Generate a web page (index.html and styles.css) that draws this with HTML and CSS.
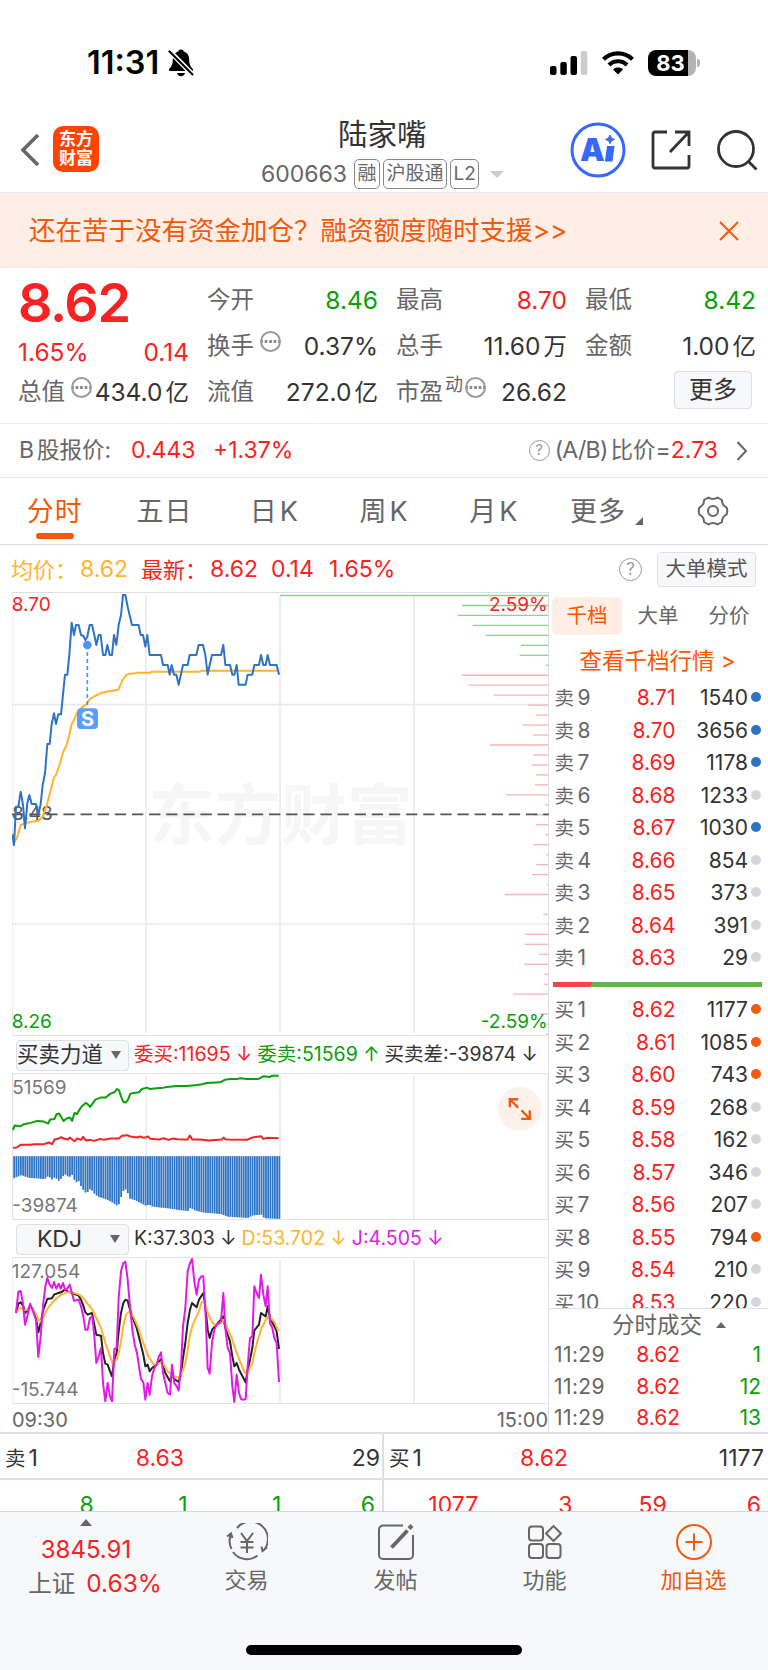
FILE: index.html
```
<!DOCTYPE html>
<html lang="zh-CN">
<head>
    <meta charset="UTF-8">
    <meta name="viewport" content="width=device-width, initial-scale=1.0">
    <title>陆家嘴 600663</title>
    <link rel="stylesheet" href="styles.css">
</head>
<body>

    <!-- Status bar -->
    <div class="status-bar">
        <span class="clock">11:31</span>
        <svg class="bell" width="26" height="28" viewBox="0 0 26 28">
            <path d="M13 0.5c-1.900 0-2.600 1-2.700 2C6.500 3.600 4.800 6.800 4.800 10.500c0 5-1.200 6.800-3.400 9.200-1 1.200-.5 2.300.8 2.300h21.600c1.300 0 1.800-1.100.8-2.300-2.200-2.400-3.400-4.200-3.400-9.200 0-3.700-1.700-6.900-5.500-8-.1-1-.8-2-2.700-2z"/>
            <path d="M9 24h8c-.4 2-1.900 3.200-4 3.200S9.400 26 9 24z"/>
            <path d="M0 0.500L26 27" stroke="#fff" stroke-width="5"/>
            <path d="M0.800 1.800L25 26" stroke="#000" stroke-width="2"/>
        </svg>
        <div class="status-right">
            <svg width="38" height="24" viewBox="0 0 38 24">
                <rect x="0" y="15" width="6.500" height="9" rx="2"/>
                <rect x="10.300" y="11" width="6.500" height="13" rx="2"/>
                <rect x="20.500" y="5" width="6.500" height="19" rx="2"/>
                <rect x="30.800" y="0" width="6.500" height="24" rx="2" fill="#ccc"/>
            </svg>
            <svg width="32" height="24" viewBox="0 0 32 24">
                <path d="M1.500 8.300C9.500 0.300 22.500 0.300 30.500 8.300" fill="none" stroke="#000" stroke-width="4.200"/>
                <path d="M7 14C12 9 20 9 25 14" fill="none" stroke="#000" stroke-width="4.200"/>
                <path d="M16 23.500l-5-5c2.800-2.600 7.200-2.600 10 0z"/>
            </svg>
            <div class="battery"><span>83</span></div>
        </div>
    </div>

    <!-- Header -->
    <div class="header">
        <svg class="back" width="20" height="34" viewBox="0 0 20 34"><path d="M18 2L3 17L18 32" fill="none" stroke="#666" stroke-width="3.600"/></svg>
        <div class="logo">东方<br>财富</div>
        <div class="stock">
            <div class="stock-name">陆家嘴</div>
            <div class="stock-code">
                <span class="code">600663</span>
                <span class="tag">融</span>
                <span class="tag">沪股通</span>
                <span class="tag">L2</span>
                <i class="caret"></i>
            </div>
        </div>
        <div class="header-icons">
            <svg width="56" height="56" viewBox="0 0 56 56">
                <circle cx="28" cy="28" r="26" fill="none" stroke="#3668ff" stroke-width="3"/>
                <text x="10" y="38.500" class="ai-text">A</text>
                <path d="M37 24h7.500l-2 15.500h-7.500z" fill="#3668ff"/>
                <path d="M40 13l1.400 3 3 1.400-3 1.400-1.400 3-1.400-3-3-1.400 3-1.400z" fill="#3668ff" stroke="#3668ff"/>
            </svg>
            <svg width="40" height="40" viewBox="0 0 40 40" fill="none" stroke="#333" stroke-width="2.800">
                <path d="M16 2H4a2 2 0 0 0-2 2v32a2 2 0 0 0 2 2h32a2 2 0 0 0 2-2V25"/>
                <path d="M24 2h14v14M38 2L19 22"/>
            </svg>
            <svg width="42" height="42" viewBox="0 0 42 42" fill="none" stroke="#333" stroke-width="2.800">
                <circle cx="20" cy="20" r="17.500"/>
                <path d="M32 32l8.500 8.500"/>
            </svg>
        </div>
    </div>

    <!-- Notice -->
    <div class="notice">
        <span>还在苦于没有资金加仓？融资额度随时支援&gt;&gt;</span>
        <svg width="20" height="20" viewBox="0 0 20 20"><path d="M1 1l18 18M19 1L1 19" stroke="#ef5a0c" stroke-width="2"/></svg>
    </div>

    <!-- Quote -->
    <div class="quote">
        <div class="quote-col main">
            <div class="price">8.62</div>
            <div class="item change red"><span>1.65%</span><span>0.14</span></div>
            <div class="item"><label>总值<i class="dots"></i></label><span>434.0<b>亿</b></span></div>
        </div>
        <div class="quote-col">
            <div class="item"><label>今开</label><span class="green">8.46</span></div>
            <div class="item"><label>换手<i class="dots gap"></i></label><span>0.37%</span></div>
            <div class="item"><label>流值</label><span>272.0<b>亿</b></span></div>
        </div>
        <div class="quote-col">
            <div class="item"><label>最高</label><span class="red">8.70</span></div>
            <div class="item"><label>总手</label><span>11.60<b>万</b></span></div>
            <div class="item"><label>市盈<sup>动</sup><i class="dots near"></i></label><span>26.62</span></div>
        </div>
        <div class="quote-col">
            <div class="item"><label>最低</label><span class="green">8.42</span></div>
            <div class="item"><label>金额</label><span>1.00<b>亿</b></span></div>
            <div class="item more"><button class="more-button">更多</button></div>
        </div>
    </div>

    <!-- B share row -->
    <div class="b-share">
        <span class="b-label">B<b>股报价:</b></span>
        <span class="red b-price">0.443</span>
        <span class="red">+1.37%</span>
        <span class="b-ratio"><i class="help small">?</i><span class="ab">(A/B)</span><b>比价</b>=<span class="red">2.73</span></span>
        <svg width="12" height="20" viewBox="0 0 12 20"><path d="M1.500 1L10 10L1.500 19" fill="none" stroke="#666" stroke-width="2"/></svg>
    </div>

    <!-- Chart tabs -->
    <div class="tabs">
        <div class="tab active">分时</div>
        <div class="tab">五日</div>
        <div class="tab">日<b>K</b></div>
        <div class="tab">周<b>K</b></div>
        <div class="tab">月<b>K</b></div>
        <div class="tab tab-more">更多<i class="corner"></i></div>
        <div class="tab">
            <svg width="32" height="32" viewBox="0 0 32 32" fill="none" stroke="#666" stroke-width="2">
                <path d="M11.500 2.500Q16 5.500 20.500 2.500L25 5Q24.800 10 29.500 12.300Q31 16 29.500 19.700Q24.800 22 25 27L20.500 29.500Q16 26.500 11.500 29.500L7 27Q7.200 22 2.500 19.700Q1 16 2.500 12.300Q7.200 10 7 5Z" stroke-linejoin="round"/>
                <circle cx="16" cy="16" r="5"/>
            </svg>
        </div>
    </div>

    <div class="legend">
        <span class="orange l-name">均价：</span><span class="orange l-avg">8.62</span>
        <span class="red l-name">最新：</span><span class="red l-last">8.62</span>
        <span class="red l-diff">0.14</span><span class="red">1.65%</span>
        <i class="help">?</i>
        <button class="mode-button">大单模式</button>
    </div>

    <div class="board">
        <!-- Charts -->
        <div class="charts">
            <svg class="chart price-chart" viewBox="36 156 1611 1332">
                <text x="446" y="896" class="watermark">东方财富</text>
                <path class="grid" d="M438 165V1480M840 165V1480M1242 165V1480M36 494H1646M36 1152H1646"/>
                <path class="frame" d="M36 157.500H1646V1487H36Z"/>
                <g id="depth"></g>
                <text x="36" y="841" class="axis">8.48</text>
                <path d="M36 823H1646" stroke="#555" stroke-width="5.500" stroke-dasharray="34 17.400"/>
                <polyline class="line avg" points="37,880 45,905 52,890 62,855 75,850 95,845 115,842 128,830 142,790 162,712 168,705 180,670 190,635 200,615 208,585 215,552 222,540 230,520 245,503 262,490 269,478 285,468 305,458 330,453 355,449 368,420 380,404 390,401 405,400 410,398 450,398 457,395 600,395 605,392 835,392"/>
                <polyline class="line last" points="37,885 42,915 48,800 55,800 62,755 69,795 75,865 82,790 88,765 95,792 108,792 115,825 122,792 128,735 135,700 142,612 149,612 155,552 162,520 168,552 175,523 183,523 189,463 195,404 202,404 208,345 215,248 222,285 228,255 236,255 243,285 250,288 256,300 262,290 269,255 276,255 283,285 289,315 296,285 302,285 309,345 316,345 322,315 329,345 336,345 342,285 349,315 356,255 363,225 369,165 376,165 383,200 390,230 396,255 416,255 422,285 429,285 436,320 442,285 449,345 483,345 489,375 503,375 509,404 515,375 522,404 529,404 536,434 549,375 563,375 569,345 589,345 596,315 609,315 616,345 623,404 629,375 636,345 663,345 670,315 676,375 690,375 697,404 703,404 710,375 716,434 737,434 743,404 757,404 763,375 777,375 783,345 790,375 797,375 803,345 810,375 830,375 837,404"/>
                <path d="M262 315V503" stroke="#4a94fb" stroke-width="5" stroke-dasharray="12 9"/>
                <circle cx="262" cy="315" r="13" fill="#4a94fb"/>
                <rect x="231" y="505" width="63" height="62" rx="12" fill="#5a9dfa"/>
                <text x="262.500" y="557" class="sell-mark">S</text>
                <text x="35" y="214" class="axis red">8.70</text>
                <text x="1643" y="214" class="axis red end">2.59%</text>
                <text x="35" y="1464" class="axis green">8.26</text>
                <text x="1643" y="1464" class="axis green end">-2.59%</text>
            </svg>

            <div class="indicator">
                <button class="select"><span>买卖力道</span><i></i></button>
                <span class="red">委买:11695 ↓</span>
                <span class="green">委卖:51569 ↑</span>
                <span>买卖差:-39874 ↓</span>
            </div>
            <svg class="chart force-chart" viewBox="36 188 1611 442">
                <path class="grid" d="M438 196V628M840 196V628M1242 196V628"/>
                <path class="frame" d="M36 189H1646V629H36Z"/>
                <g id="force"></g>
                <text x="35" y="251" class="axis gray">51569</text>
                <text x="35" y="607" class="axis gray">-39874</text>
                <polyline class="line sell" points="37,360 42,346 60,348 70,342 90,338 110,332 130,334 143,340 149,328 162,326 168,312 176,310 182,320 189,332 200,324 208,322 215,332 222,308 229,312 242,290 256,278 262,282 269,290 285,268 300,262 316,262 330,250 342,246 350,236 356,240 362,258 369,275 376,277 383,268 390,250 400,248 416,246 425,236 440,232 448,236 470,234 490,232 500,230 530,227 560,227 590,224 605,222 620,218 660,216 675,208 690,206 710,206 722,204 740,206 775,206 790,198 810,200 815,196 836,196"/>
                <polyline class="line buy" points="37,413 48,412 60,404 90,404 100,402 130,402 145,397 155,402 162,388 175,385 182,381 190,385 202,388 208,382 222,393 230,385 242,389 248,380 256,391 270,389 280,392 300,386 310,389 330,385 355,385 365,377 380,375 390,379 410,382 420,379 430,383 443,379 450,386 475,388 490,384 505,389 520,385 530,387 562,388 569,376 576,388 600,388 625,391 665,388 670,382 677,388 740,389 757,382 783,378 790,386 800,383 836,384"/>
                <circle cx="1561" cy="296" r="66" fill="#fdf1ec"/>
                <path d="M1531 291V267H1556M1531 267L1556 292M1591 300V326H1565M1591 326L1566 300" fill="none" stroke="#ef5a0c" stroke-width="7"/>
            </svg>

            <div class="indicator">
                <button class="select kdj"><span>KDJ</span><i></i></button>
                <span>K:37.303 ↓</span>
                <span class="orange">D:53.702 ↓</span>
                <span class="purple">J:4.505 ↓</span>
            </div>
            <svg class="chart kdj-chart" viewBox="36 112 1611 441">
                <path class="grid" d="M438 120V550M840 120V550M1242 120V550"/>
                <path class="frame" d="M36 113H1646V552H36Z"/>
                <text x="35" y="175" class="axis gray">127.054</text>
                <text x="35" y="530" class="axis gray">-15.744</text>
                <polyline class="line k" points="48,280 55,252 62,248 70,260 76,280 84,270 90,258 98,268 106,285 115,338 122,310 130,270 142,238 156,236 162,225 175,220 183,218 195,210 203,215 216,220 236,228 243,240 250,258 256,278 263,285 276,280 283,315 289,345 303,348 309,400 316,432 323,435 330,455 336,470 343,420 350,400 356,335 363,280 370,250 376,240 383,243 390,270 400,300 410,325 420,365 430,405 436,440 443,435 449,455 456,445 470,435 483,418 489,435 496,460 510,485 516,465 523,478 536,487 543,465 549,415 556,370 563,310 570,270 576,250 590,263 597,240 610,220 617,270 623,330 629,355 636,330 650,315 670,290 676,325 690,365 697,410 703,440 710,430 717,450 737,488 743,450 750,420 757,385 763,332 777,315 783,280 797,290 803,260 810,295 823,320 830,335 837,388"/>
                <polyline class="line avg" points="48,278 62,264 76,272 92,264 106,278 115,300 122,305 130,292 142,268 156,250 170,235 185,224 200,218 216,218 236,224 250,235 262,252 276,268 289,295 303,325 316,370 330,410 338,432 350,420 356,400 363,365 370,320 378,285 388,275 400,290 415,325 430,370 445,410 460,433 470,435 483,428 490,433 503,455 520,470 538,474 548,455 556,430 563,390 570,345 578,315 590,290 597,275 604,250 611,243 617,258 625,285 635,305 645,316 660,312 672,300 680,320 695,355 705,385 720,425 735,460 742,462 757,430 763,400 775,355 785,325 795,305 805,290 815,298 825,310 835,335"/>
                <polyline class="line j" points="48,280 55,216 62,214 68,245 75,315 82,290 90,252 97,270 108,300 115,412 122,350 130,250 136,200 142,175 149,195 156,205 162,187 169,207 176,192 182,207 189,190 196,212 203,205 209,195 216,220 222,243 236,240 243,260 250,290 256,330 263,330 270,295 277,290 283,350 289,430 296,410 303,385 309,490 316,545 323,490 330,530 336,545 343,388 350,385 356,235 363,155 370,130 376,126 383,180 390,260 397,330 404,375 411,400 417,440 423,478 430,488 436,540 443,490 449,525 456,470 463,445 470,435 476,412 483,398 489,460 496,490 503,520 510,525 516,435 523,490 530,500 536,513 543,440 549,320 556,265 563,155 570,130 576,118 583,185 590,225 597,180 604,170 610,170 617,290 623,445 629,462 636,370 643,330 650,315 663,305 670,220 676,325 683,385 690,400 697,500 703,547 710,465 717,520 723,538 730,540 737,538 743,440 750,355 757,350 763,200 770,220 777,235 783,165 790,225 797,260 803,200 810,310 817,325 823,355 830,370 837,487"/>
            </svg>
            <div class="times"><span>09:30</span><span>15:00</span></div>
        </div>

        <!-- Order book -->
        <div class="book">
            <div class="book-tabs"><span class="active">千档</span><span>大单</span><span>分价</span></div>
            <div class="book-link">查看千档行情 &gt;</div>
            <div class="orders" id="asks"></div>
            <div class="ratio"><i></i></div>
            <div class="orders bids" id="bids"></div>
            <div class="deals">
                <div class="deals-title">分时成交<i></i></div>
                <div class="deal"><span>11:29</span><span class="red">8.62</span><span class="green">1</span></div>
                <div class="deal"><span>11:29</span><span class="red">8.62</span><span class="green">12</span></div>
                <div class="deal"><span>11:29</span><span class="red">8.62</span><span class="green">13</span></div>
            </div>
        </div>
    </div>

    <!-- Best bid and ask -->
    <div class="best">
        <div class="best-side">
            <div class="best-row"><span>卖<b>1</b></span><span class="red">8.63</span><span>29</span></div>
            <div class="queue green"><span>8</span><span>1</span><span>1</span><span>6</span></div>
        </div>
        <div class="best-side">
            <div class="best-row"><span>买<b>1</b></span><span class="red">8.62</span><span>1177</span></div>
            <div class="queue red"><span>1077</span><span>3</span><span>59</span><span>6</span></div>
        </div>
    </div>

    <!-- Bottom navigation -->
    <div class="nav">
        <div class="nav-items">
            <div class="nav-index">
                <i></i>
                <div class="index-value red">3845.91</div>
                <div class="index-name">上证<span class="red">0.63%</span></div>
            </div>
            <div class="nav-item">
                <svg width="42" height="38" viewBox="0 0 42 38" fill="none" stroke="#666" stroke-width="2">
                    <path d="M5.500 26A17 17 0 0 1 5 11.500M1 13.500L5 10.500L6.500 15M11 5A17 17 0 0 1 38 27M41 24.500L36.500 28L35.500 23.500M31.500 32.500A17 17 0 0 1 7 29"/>
                    <path d="M15 10l6 8 6-8M21 18v12M14.500 19h13M14.500 24.500h13"/>
                </svg>
                <span>交易</span>
            </div>
            <div class="nav-item">
                <svg width="38" height="38" viewBox="0 0 38 38" fill="none" stroke="#666" stroke-width="2">
                    <path d="M26 2.500H6a4 4 0 0 0-4 4V32a4 4 0 0 0 4 4h26a4 4 0 0 0 4-4V12"/>
                    <path d="M14.500 24.500L30.500 7.500" stroke-width="3.800"/>
                    <path d="M32 5.500L35 2.500" stroke-width="4"/>
                </svg>
                <span>发帖</span>
            </div>
            <div class="nav-item">
                <svg width="36" height="38" viewBox="0 0 36 38" fill="none" stroke="#666" stroke-width="2">
                    <rect x="2" y="3.500" width="14" height="14" rx="3"/>
                    <rect x="2" y="21" width="14" height="14" rx="3"/>
                    <rect x="19.500" y="21" width="14" height="14" rx="3"/>
                    <path d="M26.500 3l7.500 7.500-7.500 7.500-7.500-7.500z" stroke-linejoin="round"/>
                </svg>
                <span>功能</span>
            </div>
            <div class="nav-item add">
                <svg width="38" height="38" viewBox="0 0 38 38" fill="none" stroke="#ef5a0c" stroke-width="2">
                    <circle cx="19" cy="19" r="17"/>
                    <path d="M10.500 19h17M19 10.500v17"/>
                </svg>
                <span>加自选</span>
            </div>
        </div>
        <div class="home-bar"></div>
    </div>

    <script>
        // label, price, volume, dot colour
        const asks = [
            ["9", "8.71", 1540, "blue"], ["8", "8.70", 3656, "blue"], ["7", "8.69", 1178, "blue"],
            ["6", "8.68", 1233, ""], ["5", "8.67", 1030, "blue"], ["4", "8.66", 854, ""],
            ["3", "8.65", 373, ""], ["2", "8.64", 391, ""], ["1", "8.63", 29, ""]
        ];
        const bids = [
            ["1", "8.62", 1177, "hot"], ["2", "8.61", 1085, "hot"], ["3", "8.60", 743, "hot"],
            ["4", "8.59", 268, ""], ["5", "8.58", 162, ""], ["6", "8.57", 346, ""], ["7", "8.56", 207, ""],
            ["8", "8.55", 794, "hot"], ["9", "8.54", 210, ""], ["10", "8.53", 220, ""]
        ];

        function renderOrders(id, side, rows) {
            document.getElementById(id).innerHTML = rows.map(r =>
                `<div class="order"><span>${side}<b>${r[0]}</b></span><span class="red">${r[1]}</span><span>${r[2]}</span><i class="${r[3]}"></i></div>`
            ).join("");
        }
        renderOrders("asks", "卖", asks);
        renderOrders("bids", "买", bids);

        // Resting volume per price level, top to bottom
        const depth = [805, 259, 271, 227, 188, 82, 86, 7, 259, 239, 164, 60, 36, 76, 46, 175, 46, 49, 37, 40, 127, 10,
            43, 37, 9, 45, 7, 36, 49, 5, 131, 1, 15, 3, 70, 71, 28, 73, 11, 12, 106, 3, 25, 5, 6];
        document.getElementById("depth").innerHTML = depth.map((w, i) =>
            `<path d="M${1645 - w} ${(166.5 + i * 29.9).toFixed(1)}H1645" stroke="${i < 8 ? "#8fd08f" : "#f9b4b4"}" stroke-width="4"/>`
        ).join("");

        // Buy/sell difference, one bar a minute
        const force = [[37, 505], [48, 500], [60, 495], [80, 503], [130, 507], [142, 497], [150, 510], [162, 500], [170, 514],
            [180, 505], [190, 492], [203, 502], [215, 492], [222, 523], [230, 508], [242, 535], [256, 552], [262, 540],
            [269, 536], [276, 548], [290, 560], [310, 566], [330, 575], [349, 588], [356, 578], [363, 545], [376, 536],
            [384, 565], [400, 570], [420, 580], [436, 588], [443, 583], [455, 590], [500, 595], [540, 601], [562, 603],
            [570, 590], [576, 600], [610, 608], [660, 612], [680, 620], [740, 624], [757, 616], [783, 614], [790, 625], [845, 627]];
        let bars = "";
        for (let x = 38; x < 838; x += 6.7) {
            const n = force.findIndex(p => p[0] > x);
            const [a, b] = [force[n - 1], force[n]];
            const y = a[1] + (b[1] - a[1]) * (x - a[0]) / (b[0] - a[0]);
            bars += `<rect x="${x.toFixed(1)}" y="438" width="5.4" height="${(y - 438).toFixed(1)}"/>`;
        }
        document.getElementById("force").innerHTML = bars;
    </script>

</body>
</html>
```
FILE: styles.css
```
* { box-sizing: border-box; }
body {
    width: 768px;
    height: 1670px;
    margin: 0;
    overflow: hidden;
    background: #fff;
    color: #333;
    font-family: Inter, "Noto Sans CJK SC", sans-serif;
    font-weight: 400;
    font-size: 23px;
    line-height: 1;
}
b { font-weight: inherit; }
i { font-style: normal; }
svg { display: block; flex: none; }
button { font: inherit; color: #333; background: #f7f8fa; border: 1px solid #dcdfe6; border-radius: 4px; padding: 0; line-height: 1; }
span, label { white-space: nowrap; }

.red { color: #f82222; }
.green { color: #0aa00a; }
.orange { color: #ffb32e; }
.purple { color: #e01be8; }

/* Status bar */
.status-bar { height: 110px; padding: 15px 72px 0 87px; display: flex; align-items: center; color: #000; }
.clock { font-size: 32.5px; font-weight: 600; padding-top: 2px; }
.bell { margin-left: 9px; }
.status-right { margin-left: auto; display: flex; align-items: center; gap: 14px; }
.battery {
    position: relative;
    width: 48px;
    height: 26px;
    padding-right: 3px;
    border-radius: 8px;
    background: linear-gradient(to right, #000 84%, #b3b3b3 84%);
    color: #fff;
    font-size: 22px;
    font-weight: 700;
    line-height: 27px;
    text-align: center;
}
.battery::after { content: ""; position: absolute; right: -4px; top: 9px; width: 3px; height: 8px; border-radius: 0 3px 3px 0; background: #b3b3b3; }

/* Header */
.header { height: 83px; display: flex; padding: 0 10px 0 20px; border-bottom: 1px solid #e6e8eb; }
.back { margin-top: 23px; }
.logo {
    width: 46px;
    height: 46px;
    margin: 16px 0 0 13px;
    border-radius: 10px;
    background: #ff4400;
    color: #fff;
    font-size: 17px;
    font-weight: 700;
    line-height: 19px;
    padding-top: 4px;
    text-align: center;
}
.stock { flex: 1; padding: 9px 0 0 159px; }
.stock-name { padding-left: 80px; font-size: 29.5px; line-height: 30px; }
.stock-code { display: flex; align-items: center; margin-top: 10px; padding-left: 3px; color: #666; }
.stock-code .code { font-size: 23px; width: 93px; }
.tag { height: 30px; margin-right: 3px; padding: 0 2.5px; border: 1px solid #888; border-radius: 5px; font-size: 19px; line-height: 27px; }
.caret { margin-left: 8px; border: 7px solid transparent; border-top-color: #ccc; border-bottom: 0; }
.header-icons { display: flex; align-items: center; gap: 25px; height: 80px; }
.ai-text { font-size: 31px; font-weight: 900; fill: #3668ff; }

/* Notice */
.notice { height: 75px; padding: 0 29px; display: flex; align-items: center; justify-content: space-between; background: #ffeee6; color: #ef5a0c; font-size: 26.5px; }

/* Quote */
.quote { height: 156px; padding: 9px 12px 0 18px; display: flex; gap: 18px; border-bottom: 1px solid #ebedf0; }
.quote-col { width: 171px; }
.item { height: 46px; display: flex; align-items: center; justify-content: space-between; font-size: 24.5px; }
.item label { display: flex; align-items: center; color: #666; font-size: 23.5px; }
.item b { font-size: 23.5px; margin-left: 3px; }
.item sup { font-size: 18px; line-height: 18px; margin: -14px 0 0 2px; }
.price { height: 56px; font-size: 54px; font-weight: 600; line-height: 52px; letter-spacing: -1.4px; color: #f82222; }
.main .change { height: 36px; padding-top: 2px; }
.dots { width: 21px; height: 21px; margin: -10px 0 0 6px; border: 2px solid #999; border-radius: 50%; background: radial-gradient(circle, #888 1.4px, transparent 1.8px) center / 4.5px 17px repeat-x; }
.dots.near { margin-left: 2px; }
.item.more { justify-content: flex-end; padding-right: 4px; }
.more-button { width: 78px; height: 38px; margin-top: -5px; font-size: 24px; border-width: 1.5px; }

/* B share row */
.b-share { height: 54px; padding: 0 20px 0 19px; display: flex; align-items: center; border-bottom: 1px solid #e6e8eb; font-size: 23px; }
.b-label { width: 112px; color: #666; }
.b-label b { font-size: 22.5px; margin-left: 3px; }
.b-price { width: 82px; }
.b-ratio { margin-left: auto; margin-right: 18px; display: flex; align-items: center; color: #666; }
.b-ratio b { font-size: 22.5px; margin-left: 3px; }
.ab { letter-spacing: -0.7px; }
.help { width: 23px; height: 23px; border: 1.5px solid #999; border-radius: 50%; color: #999; font-size: 17px; line-height: 20px; text-align: center; }
.help.small { width: 21px; height: 21px; margin-right: 5px; font-size: 15px; line-height: 18px; }

/* Tabs */
.tabs { height: 67px; display: flex; border-bottom: 1px solid #d8dae0; color: #666; font-size: 27px; }
.tab { position: relative; width: 110px; display: flex; align-items: center; justify-content: center; letter-spacing: 1px; }
.tab b { margin-left: 2px; }
.tab.active { color: #ef5a0c; }
.tab.active::after { content: ""; position: absolute; left: 36px; bottom: 5px; width: 38px; height: 6px; border-radius: 3px; background: #ef5a0c; }
.tab-more { padding-left: 6px; }
.corner { margin: 20px 0 0 9px; border: 4px solid #666; border-left-color: transparent; border-top-color: transparent; }

.legend { height: 47px; padding: 2px 12px 0 11px; display: flex; align-items: center; }
.l-name { width: 69px; font-size: 22px; }
.l-avg { width: 61px; }
.l-last { width: 61px; }
.l-diff { width: 58px; }
.legend .help { margin-left: auto; }
.mode-button { width: 99px; height: 35px; margin-left: 15px; font-size: 20.5px; color: #555; }

/* Charts */
.board { display: flex; height: 842px; border-bottom: 2px solid #dddfe5; }
.charts { width: 549px; padding-left: 12px; border-right: 1px solid #dddfe5; }
.chart { width: 537px; }
.price-chart { height: 444px; }
.force-chart { height: 147px; }
.kdj-chart { height: 147px; }
.grid { fill: none; stroke: #e8ebf2; stroke-width: 5; }
.frame { fill: none; stroke: #dddfe5; stroke-width: 3; }
.line { fill: none; stroke-width: 6; stroke-linejoin: round; }
.last { stroke: #2f74c4; }
.avg { stroke: #ffb32e; }
.sell { stroke: #0aa00a; }
.buy { stroke: #f82222; }
.k { stroke: #222; }
.j { stroke: #e01be8; }
#force { fill: #2f74c4; }
.axis { font-size: 57px; fill: #555; }
.axis.red { fill: #f82222; }
.axis.green { fill: #0aa00a; }
.axis.gray { fill: #777; }
.end { text-anchor: end; }
.watermark { font-size: 198px; font-weight: 700; fill: #f6f6f6; }
.sell-mark { font-size: 60px; font-weight: 700; fill: #fff; text-anchor: middle; }

.indicator { height: 37px; padding: 1px 0 0 4px; display: flex; align-items: center; gap: 5px; font-size: 19.5px; }
.select { width: 113px; height: 31px; padding-right: 8px; display: flex; align-items: center; font-size: 21.5px; }
.select span { flex: 1; text-align: center; }
.select.kdj { font-size: 23px; }
.select i { margin-left: 8px; border: 5px solid transparent; border-top: 8px solid #666; border-bottom: 0; }
.times { height: 30px; padding-top: 2px; display: flex; justify-content: space-between; align-items: center; font-size: 20px; color: #666; }

/* Order book */
.book { width: 219px; display: flex; flex-direction: column; }
.book-tabs { height: 48px; padding: 5px 4px 5px 3px; display: flex; justify-content: space-between; color: #666; font-size: 20.5px; line-height: 38px; text-align: center; }
.book-tabs span { width: 70px; }
.book-tabs .active { border-radius: 5px; background: #ffeee6; color: #ff5500; }
.book-link { height: 41px; padding-right: 2px; line-height: 41px; color: #ff5500; font-size: 22.5px; text-align: center; }
.orders { flex: none; height: 293px; padding-left: 5.5px; font-size: 21px; }
.order { height: 32.5px; padding-top: 1px; display: flex; align-items: center; }
.order span:nth-child(1) { width: 60px; color: #666; font-size: 19.5px; }
.order span:nth-child(1) b { margin-left: 3.5px; font-size: 21px; }
.order span:nth-child(2) { width: 61px; text-align: right; }
.order span:nth-child(3) { width: 72.5px; text-align: right; }
.order i { width: 10px; height: 10px; margin: -1px 0 0 3px; border-radius: 50%; background: #d3d6dd; }
.order i.blue { background: #2f74c4; }
.order i.hot { background: #ef5a0c; }
.ratio { flex: none; height: 5px; margin: 8px 6px 6px 4px; background: #5cb944; }
.ratio i { display: block; width: 40px; height: 5px; background: #ef4848; clip-path: polygon(0 0, 100% 0, 92% 100%, 0 100%); }
.orders.bids { height: 316px; overflow: hidden; border-bottom: 1px solid #dddfe5; }
.deals { padding: 0 7px 0 5px; font-size: 21px; }
.deals-title { height: 30px; padding: 2px 0 0 23px; display: flex; align-items: center; justify-content: center; gap: 14px; color: #666; font-size: 22.5px; }
.deals-title i { border: 5px solid transparent; border-bottom: 6px solid #666; border-top: 0; }
.deal { height: 31.4px; display: flex; align-items: center; }
.deal span:nth-child(1) { width: 60px; color: #666; letter-spacing: 0.4px; }
.deal span:nth-child(2) { width: 66px; text-align: right; }
.deal span:nth-child(3) { flex: 1; text-align: right; }

/* Best bid and ask */
.best { display: flex; height: 78px; overflow: hidden; border-bottom: 1px solid #d3d6dd; }
.best-side { width: 384px; }
.best-side:first-child { border-right: 2px solid #dddfe5; }
.best-row { height: 46px; padding: 4px 4px 0 5px; display: flex; align-items: center; border-bottom: 2px solid #dddfe5; }
.best-side:first-child .best-row { padding-right: 2px; }
.best-row span:nth-child(1) { width: 60px; font-size: 20.5px; }
.best-row span:nth-child(1) b { margin-left: 3px; font-size: 23px; }
.best-row span:nth-child(2) { width: 119px; text-align: right; }
.best-row span:nth-child(3) { flex: 1; text-align: right; }
.queue { display: flex; padding: 14px 7px 0 0; }
.queue span { flex: 1; text-align: right; }

/* Bottom navigation */
.nav { height: 158px; background: #f7f8fa; }
.nav-items { display: flex; height: 133px; }
.nav-index { width: 172px; display: flex; flex-direction: column; align-items: center; font-size: 24px; }
.nav-index i { margin: 7px 0 12px; border: 6.5px solid transparent; border-bottom: 7px solid #666; border-top: 0; }
.index-name { margin-top: 9px; padding-left: 18px; color: #666; font-size: 23.5px; }
.index-name span { margin-left: 11px; font-size: 24.5px; }
.nav-item { width: 149px; display: flex; flex-direction: column; align-items: center; padding-top: 11px; color: #666; font-size: 22px; }
.nav-item span { margin-top: 8px; }
.nav-item.add { color: #ef5a0c; }
.home-bar { width: 276px; height: 10px; margin: 0 auto; border-radius: 5px; background: #000; }
```
